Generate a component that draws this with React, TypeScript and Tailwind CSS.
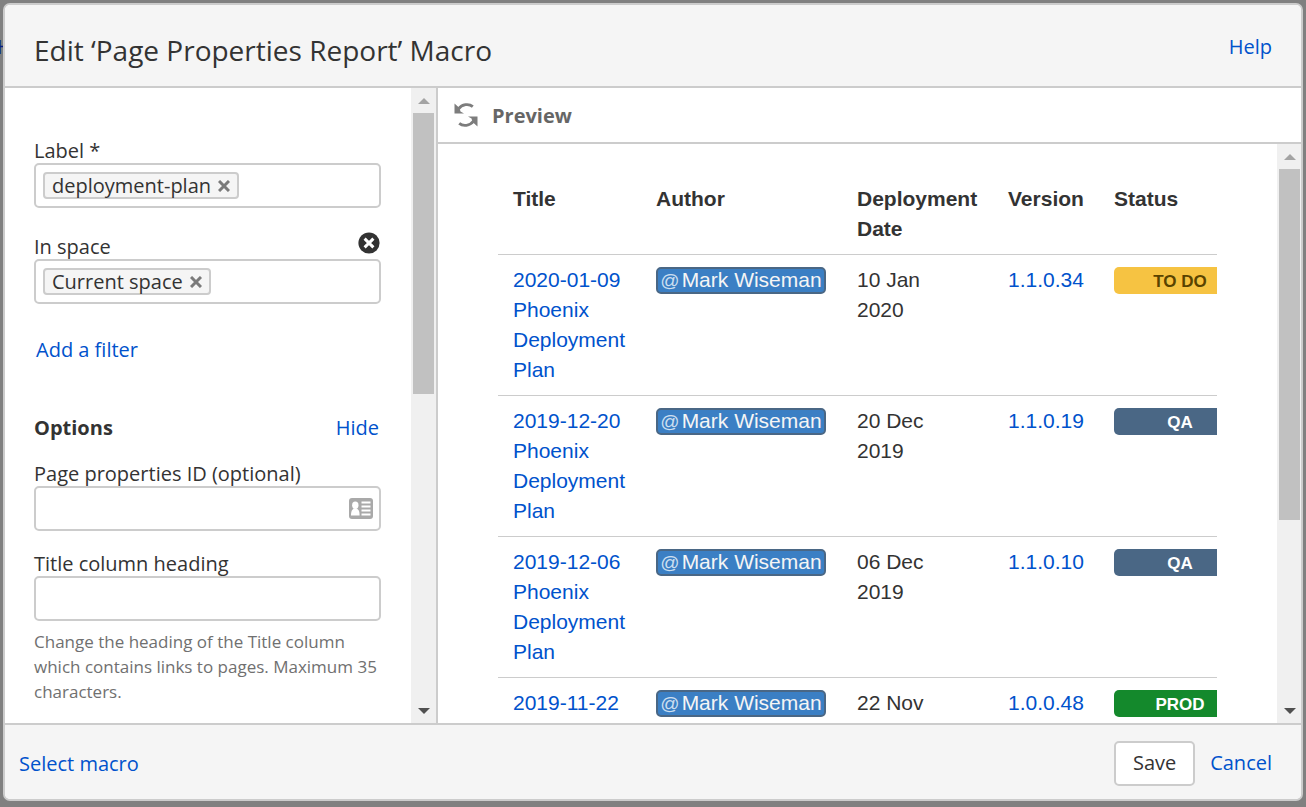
import { useState } from "react";

const statusStyles: Record<string, string> = {
  "TO DO": "bg-[#f6c342] text-[#594300]",
  QA: "bg-[#4a6785] text-white",
  PROD: "bg-[#14892c] text-white",
};

const plans = [
  { day: "2020-01-09", author: "Mark Wiseman", date: "10 Jan 2020", version: "1.1.0.34", status: "TO DO" },
  { day: "2019-12-20", author: "Mark Wiseman", date: "20 Dec 2019", version: "1.1.0.19", status: "QA" },
  { day: "2019-12-06", author: "Mark Wiseman", date: "06 Dec 2019", version: "1.1.0.10", status: "QA" },
  { day: "2019-11-22", author: "Mark Wiseman", date: "22 Nov 2019", version: "1.0.0.48", status: "PROD" },
];

function Scrollbar({ thumb }: { thumb: number }) {
  return (
    <div className="flex shrink-0 flex-col bg-[#f0f0f0] pr-px pl-0.5" aria-hidden="true">
      <div className="flex h-[25px] items-center justify-center">
        <svg width="12" height="6" viewBox="0 0 12 6">
          <path d="M0 6L6 0l6 6z" fill="#a3a3a3" />
        </svg>
      </div>
      <div className="min-h-0 w-[21px] flex-1">
        <div className="bg-[#c1c1c1]" style={{ height: `${thumb}%` }} />
      </div>
      <div className="flex h-[25px] items-center justify-center">
        <svg width="12" height="6" viewBox="0 0 12 6">
          <path d="M0 0h12L6 6z" fill="#505050" />
        </svg>
      </div>
    </div>
  );
}

function TagField({ id, label, tag }: { id: string; label: string; tag: string }) {
  const [tags, setTags] = useState([tag]);

  return (
    <div className="flex h-[45px] items-center rounded-[5px] border-2 border-[#ccc] bg-white px-[7px]">
      {tags.map((t) => (
        <span
          key={t}
          className="flex h-[27px] shrink-0 items-center gap-[7px] rounded-[4px] border-2 border-[#ccc] bg-[#f5f5f5] px-[7px] leading-[25px]"
        >
          {t}
          <button type="button" aria-label={`Remove ${t} from ${label}`} onClick={() => setTags([])}>
            <svg width="12" height="12" viewBox="0 0 12 12">
              <path d="M1 1l10 10M11 1L1 11" stroke="#7a7a7a" strokeWidth="3" />
            </svg>
          </button>
        </span>
      ))}
      <input id={id} type="text" className="min-w-0 flex-1 bg-transparent pl-1 outline-none" />
    </div>
  );
}

function MacroForm() {
  const [showOptions, setShowOptions] = useState(true);

  return (
    <form className="min-w-0 flex-1 overflow-hidden pt-[51px] pr-[30px] pl-[29px]">
      <label htmlFor="label" className="block leading-6">
        Label *
      </label>
      <TagField id="label" label="Label" tag="deployment-plan" />

      <div className="mt-6 flex items-end justify-between">
        <label htmlFor="space" className="leading-6">
          In space
        </label>
        <button type="button" aria-label="Remove filter" className="flex h-[27px] items-start">
          <svg width="23" height="22" viewBox="0 0 23 22">
            <circle cx="11" cy="11" r="10.6" fill="#333" />
            <path d="M6.600 6.600l8.800 8.800M15.400 6.600l-8.800 8.800" stroke="#fff" strokeWidth="3" />
          </svg>
        </button>
      </div>
      <TagField id="space" label="In space" tag="Current space" />

      <button type="button" className="mt-[31px] block px-0.5 leading-[30px] text-[#0052cc]">
        Add a filter
      </button>

      <div className="mt-12 flex justify-between leading-[30px]">
        <h2 className="font-bold">Options</h2>
        <button type="button" className="px-0.5 text-[#0052cc]" onClick={() => setShowOptions(!showOptions)}>
          {showOptions ? "Hide" : "Show"}
        </button>
      </div>

      {showOptions && (
        <>
          <label htmlFor="properties-id" className="mt-[19px] block leading-6">
            Page properties ID (optional)
          </label>
          <div className="flex h-[45px] items-center rounded-[5px] border-2 border-[#ccc] pr-[6px]">
            <input id="properties-id" type="text" className="min-w-0 flex-1 px-2 outline-none" />
            <svg width="24" height="21" viewBox="0 0 24 21">
              <rect width="24" height="21" rx="3" fill="#a9a9a9" />
              <ellipse cx="6.300" cy="7.200" rx="3.200" ry="3.700" fill="#fff" />
              <path d="M2 17.500c0-4 .8-6 3-6.900h2.600c2.200.9 3 2.900 3 6.900z" fill="#fff" />
              <path d="M12.500 4.500h9M12.500 8.500h9M12.500 12.500h9M12.500 16.500h9" stroke="#fff" strokeWidth="2" />
            </svg>
          </div>

          <label htmlFor="title-heading" className="mt-[21px] block leading-6">
            Title column heading
          </label>
          <input
            id="title-heading"
            type="text"
            aria-describedby="title-heading-help"
            className="block h-[45px] w-full rounded-[5px] border-2 border-[#ccc] px-2 outline-none"
          />
          <p id="title-heading-help" className="mt-2 text-[17px] leading-[25px] text-[#707070]">
            Change the heading of the Title column which contains links to pages. Maximum 35 characters.
          </p>
        </>
      )}
    </form>
  );
}

function ReportTable() {
  return (
    <table className="w-[763px] table-fixed text-left font-['Liberation_Sans',Arial,sans-serif] text-[21px] leading-[30px] text-[#333]">
      <colgroup>
        <col className="w-[143px]" />
        <col className="w-[201px]" />
        <col className="w-[151px]" />
        <col className="w-[106px]" />
        <col className="w-[162px]" />
      </colgroup>
      <thead>
        <tr className="border-b border-[#ccc] align-top">
          {["Title", "Author", "Deployment Date", "Version", "Status"].map((h) => (
            <th key={h} className="py-2.5 pl-[15px] font-bold">
              {h}
            </th>
          ))}
        </tr>
      </thead>
      <tbody>
        {plans.map((p) => (
          <tr key={p.day} className="border-b border-[#ccc] align-top">
            <td className="py-2.5 pl-[15px]">
              <a href="#" className="text-[#0052cc]">
                {p.day} Phoenix Deployment Plan
              </a>
            </td>
            <td className="py-2.5 pl-[15px]">
              <a
                href="#"
                className="mt-0.5 flex h-[27px] w-[170px] items-baseline justify-center rounded-[5px] border-2 border-[#4a6785] bg-[#3b7fc4] leading-[22px] whitespace-nowrap text-[#f5f5f5]"
              >
                <span className="mr-0.5 text-[19px] text-[#ccdff0]">@</span>
                {p.author}
              </a>
            </td>
            <td className="py-2.5 pr-6 pl-[15px]">{p.date}</td>
            <td className="py-2.5 pl-[15px]">
              <a href="#" className="text-[#0052cc]">
                {p.version}
              </a>
            </td>
            <td className="px-[15px] py-2.5">
              <span
                className={`mt-0.5 block h-[27px] rounded-[5px] text-center text-[17px] leading-[29px] font-bold ${statusStyles[p.status]}`}
              >
                {p.status}
              </span>
            </td>
          </tr>
        ))}
      </tbody>
    </table>
  );
}

export default function App() {
  return (
    <div className="relative flex h-screen overflow-hidden bg-[#808080] px-[3px] pt-[3px] pb-[6px] font-['Open_Sans','Noto_Sans',sans-serif] text-[20px] text-[#333]">
      {/* page header link, mostly hidden behind the dialog */}
      <span className="absolute top-8 -left-[3px] leading-[30px] text-[#0a1f80]">H</span>

      <div
        role="dialog"
        aria-labelledby="dialog-title"
        className="relative flex min-w-0 flex-1 flex-col overflow-hidden rounded-[7px] border-2 border-[#ccc] bg-white"
      >
        <header className="flex h-[83px] shrink-0 items-center justify-between border-b-2 border-[#ccc] bg-[#f5f5f5] pr-[29px] pl-[29px]">
          <h1 id="dialog-title" className="pt-2 text-[28px] leading-10">
            Edit ‘Page Properties Report’ Macro
          </h1>
          <a href="#" className="pt-0.5 text-[#0052cc]">
            Help
          </a>
        </header>

        <div className="flex min-h-0 flex-1">
          <div className="flex w-[433px] shrink-0 border-r-2 border-[#ccc]">
            <MacroForm />
            <div className="flex bg-[#f0f0f0] pr-px">
              <Scrollbar thumb={48} />
            </div>
          </div>

          <section className="flex min-w-0 flex-1 flex-col">
            <div className="flex h-14 shrink-0 items-center gap-[14px] border-b-2 border-[#ccc] pl-4 text-[#666]">
              <button type="button" aria-label="Refresh preview">
                <svg width="24" height="24" viewBox="0 0 24 24" fill="none">
                  <path d="M4.500 6C8 .9 15 .4 18.800 3.600" stroke="#7d7d7d" strokeWidth="2.800" />
                  <path d="M.5.500V10.500H10L6.500 8.500 5.500 5z" fill="#7d7d7d" />
                  <path d="M19.500 18C16 23.100 9 23.600 5.200 20.400" stroke="#7d7d7d" strokeWidth="2.800" />
                  <path d="M23.500 23.500V13.500H14l3.500 2L18.500 19z" fill="#7d7d7d" />
                </svg>
              </button>
              <h2 className="pt-0.5 font-bold">Preview</h2>
            </div>
            <div className="flex min-h-0 flex-1">
              <div className="min-w-0 flex-1 overflow-hidden px-[60px] pt-[30px]">
                <div className="overflow-hidden">
                  <ReportTable />
                </div>
              </div>
              <Scrollbar thumb={66.4} />
            </div>
          </section>
        </div>

        <footer className="flex h-[76px] shrink-0 items-center justify-between border-t-2 border-[#ccc] bg-[#f5f5f5] pt-0.5 pr-[29px] pl-[14px]">
          <button type="button" className="pt-0.5 text-[#0052cc]">
            Select macro
          </button>
          <div className="flex items-center gap-[15px]">
            <button type="button" className="h-[45px] w-[81px] rounded-[5px] border-2 border-[#ccc] bg-white">
              Save
            </button>
            <button type="button" className="text-[#0052cc]">
              Cancel
            </button>
          </div>
        </footer>
      </div>
    </div>
  );
}
